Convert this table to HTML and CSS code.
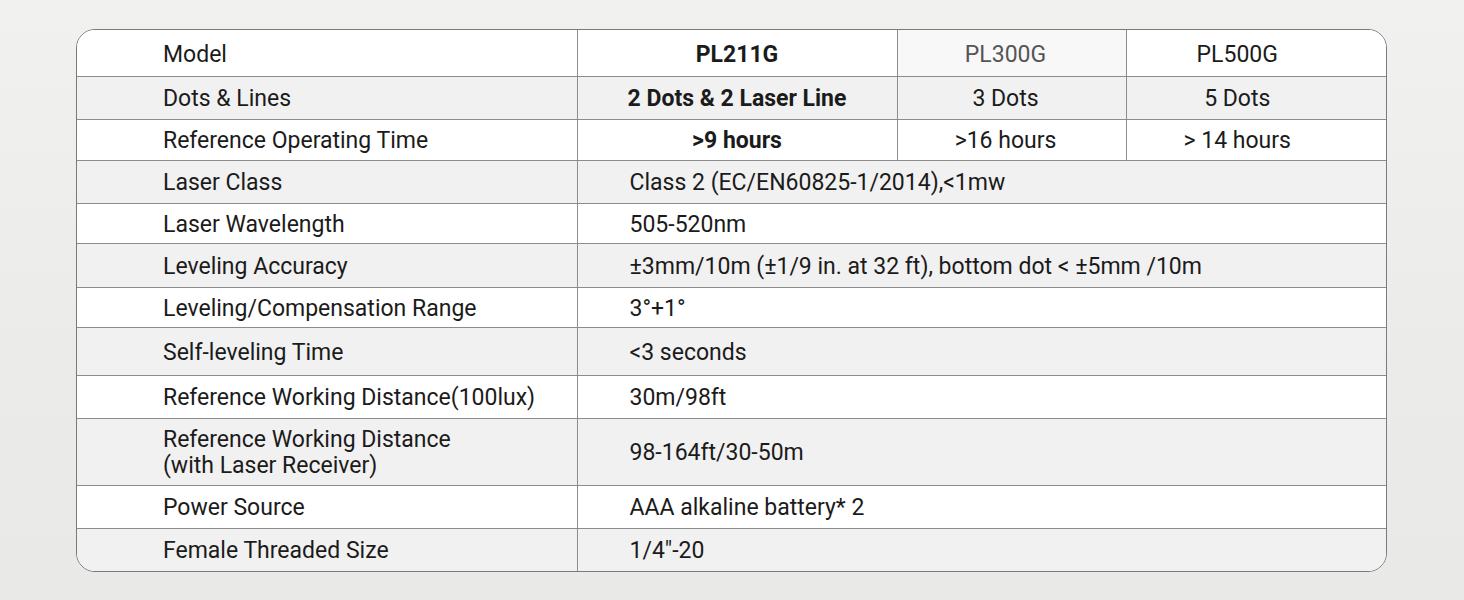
FILE: index.html
```html
<!DOCTYPE html>
<html>
<head>
<meta charset="utf-8">
<link rel="stylesheet" href="styles.css">
</head>
<body>
<div class="page">
  <div class="card">
    <table class="spec">
      <colgroup>
        <col class="c1"><col class="c2"><col class="c3"><col class="c4">
      </colgroup>
      <tr class="r-model white">
        <td class="label">Model</td>
        <td class="center bold">PL211G</td>
        <td class="center k3 muted">PL300G</td>
        <td class="center k4">PL500G</td>
      </tr>
      <tr class="r-dots grey">
        <td class="label">Dots &amp; Lines</td>
        <td class="center bold">2 Dots &amp; 2 Laser Line</td>
        <td class="center k3">3 Dots</td>
        <td class="center k4">5 Dots</td>
      </tr>
      <tr class="r-time white">
        <td class="label">Reference Operating Time</td>
        <td class="center bold">&gt;9 hours</td>
        <td class="center k3">&gt;16 hours</td>
        <td class="center k4">&gt; 14 hours</td>
      </tr>
      <tr class="r-class grey">
        <td class="label">Laser Class</td>
        <td class="value" colspan="3">Class 2 (EC/EN60825-1/2014),&lt;1mw</td>
      </tr>
      <tr class="r-wave white">
        <td class="label">Laser Wavelength</td>
        <td class="value" colspan="3">505-520nm</td>
      </tr>
      <tr class="r-acc grey">
        <td class="label">Leveling Accuracy</td>
        <td class="value" colspan="3">±3mm/10m (±1/9 in. at 32 ft), bottom dot &lt; ±5mm /10m</td>
      </tr>
      <tr class="r-comp white">
        <td class="label">Leveling/Compensation Range</td>
        <td class="value" colspan="3">3°+1°</td>
      </tr>
      <tr class="r-self grey">
        <td class="label">Self-leveling Time</td>
        <td class="value" colspan="3">&lt;3 seconds</td>
      </tr>
      <tr class="r-dist white">
        <td class="label">Reference Working Distance(100lux)</td>
        <td class="value" colspan="3">30m/98ft</td>
      </tr>
      <tr class="r-recv grey">
        <td class="label two">Reference Working Distance<br>(with Laser Receiver)</td>
        <td class="value" colspan="3">98-164ft/30-50m</td>
      </tr>
      <tr class="r-power white">
        <td class="label">Power Source</td>
        <td class="value" colspan="3">AAA alkaline battery* 2</td>
      </tr>
      <tr class="r-thread grey last">
        <td class="label">Female Threaded Size</td>
        <td class="value" colspan="3">1/4"-20</td>
      </tr>
    </table>
  </div>
</div>
</body>
</html>
```

FILE: styles.css
```css
html, body {
  margin: 0;
  padding: 0;
}
body {
  width: 1464px;
  height: 600px;
  overflow: hidden;
  background: linear-gradient(180deg, #f1f1f0 0%, #ebebea 60%, #e9e9e8 100%);
  font-family: Roboto, "Liberation Sans", sans-serif;
  color: #1b1b1b;
}
.page {
  padding: 29px 0 0 76px;
}
.card {
  width: 1309px;
  border: 1px solid #7a7a7a;
  border-radius: 19px;
  overflow: hidden;
  background: #fff;
}
.spec {
  width: 100%;
  border-collapse: collapse;
  table-layout: fixed;
  font-size: 23px;
  line-height: 26px;
}
.c1 { width: 500px; }
.c2 { width: 320px; }
.c3 { width: 229px; }
.c4 { width: 260px; }
.spec td {
  padding: 2px 0 0 0;
  border-bottom: 1px solid #8c8c8c;
  border-left: 1px solid #8c8c8c;
  vertical-align: middle;
}
.spec td:first-child { border-left: none; }
.spec tr.last td { border-bottom: none; }
.white { background: #ffffff; }
.grey { background: #f1f1f1; }
.label { padding-left: 86px !important; }
.value { padding-left: 52px !important; }
.center { text-align: center; }
.k3 { padding-right: 12px !important; }
.k4 { padding-right: 38px !important; }
.bold { font-weight: 700; }
.muted { color: #555555; background: #f8f8f8; }
.two { line-height: 26px; }

.r-model td { height: 42px; padding-top: 4px; }
.r-dots td { height: 40px; }
.r-time td { height: 38px; }
.r-class td { height: 40px; }
.r-wave td { height: 37px; }
.r-acc td { height: 41px; }
.r-comp td { height: 37px; }
.r-self td { height: 45px; }
.r-dist td { height: 40px; }
.r-recv td { height: 64px; }
.r-power td { height: 40px; }
.r-thread td { height: 40px; }
```
